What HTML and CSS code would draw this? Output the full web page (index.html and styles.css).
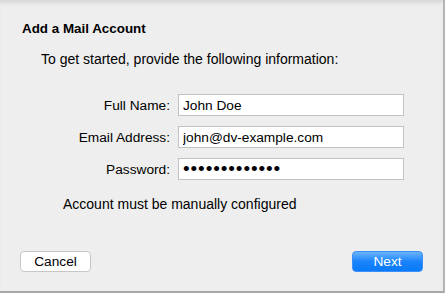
FILE: index.html
```html
<!DOCTYPE html>
<html lang="en">
<head>
    <meta charset="UTF-8">
    <title>Add a Mail Account</title>
    <link rel="stylesheet" href="styles.css">
</head>
<body>
    <div class="dialog">
        <h1>Add a Mail Account</h1>
        <p class="intro">To get started, provide the following information:</p>

        <div class="form">
            <div class="row">
                <label for="fullName">Full Name:</label>
                <input type="text" id="fullName" value="John Doe">
            </div>
            <div class="row">
                <label for="email">Email Address:</label>
                <input type="text" id="email" value="john@dv-example.com">
            </div>
            <div class="row">
                <label for="password">Password:</label>
                <input type="password" id="password" value="secretsecret1">
            </div>
        </div>

        <p class="status">Account must be manually configured</p>

        <div class="button-group">
            <button class="btn-secondary">Cancel</button>
            <button class="btn-primary">Next</button>
        </div>
    </div>
</body>
</html>
```

FILE: styles.css
```css
* {
    box-sizing: border-box;
    font-family: 'Liberation Sans', Arial, sans-serif;
}

body {
    margin: 0;
    background: #ececec;
}

.dialog {
    width: 445px;
    height: 293px;
    background: #eeeeee;
    border-right: 2px solid #b4b4b4;
    border-bottom: 2px solid #a8a8a8;
    box-shadow: inset 0 5px 5px -3px rgba(0, 0, 0, 0.12);
    display: flex;
    flex-direction: column;
    padding: 21px 0 0 0;
    color: #000;
}

h1 {
    margin: 0 0 0 22px;
    font-size: 13.4px;
    line-height: 16px;
    font-weight: bold;
}

.intro {
    margin: 14px 0 0 41px;
    font-size: 14px;
    line-height: 16px;
}

.form {
    margin: 27px 0 0 60px;
    display: flex;
    flex-direction: column;
    gap: 10px;
}

.row {
    display: flex;
    align-items: center;
    gap: 8px;
}

label {
    width: 110px;
    text-align: right;
    font-size: 13.7px;
}

input {
    width: 226px;
    height: 22px;
    padding: 1px 4px 0;
    border: 1px solid #c2c2c2;
    background: #fff;
    font-size: 13.7px;
    color: #000;
    outline: none;
}

input[type="password"] {
    font-size: 19px;
    letter-spacing: 0.9px;
    padding-top: 0;
}

.status {
    margin: 16px 0 0 63px;
    font-size: 14px;
    line-height: 16px;
}

.button-group {
    margin-top: auto;
    display: flex;
    justify-content: space-between;
    padding: 0 20px 19px 20px;
}

button {
    width: 71px;
    height: 21px;
    padding: 0;
    border-radius: 4px;
    font-size: 13.7px;
    cursor: pointer;
}

.btn-secondary {
    background: #fff;
    border: 1px solid #c6c6c6;
    color: #000;
}

.btn-primary {
    background: linear-gradient(#6bb4fb, #1a84fb 50%, #0a7af8);
    border: 1px solid #3c8ef8;
    color: #fff;
}
```
